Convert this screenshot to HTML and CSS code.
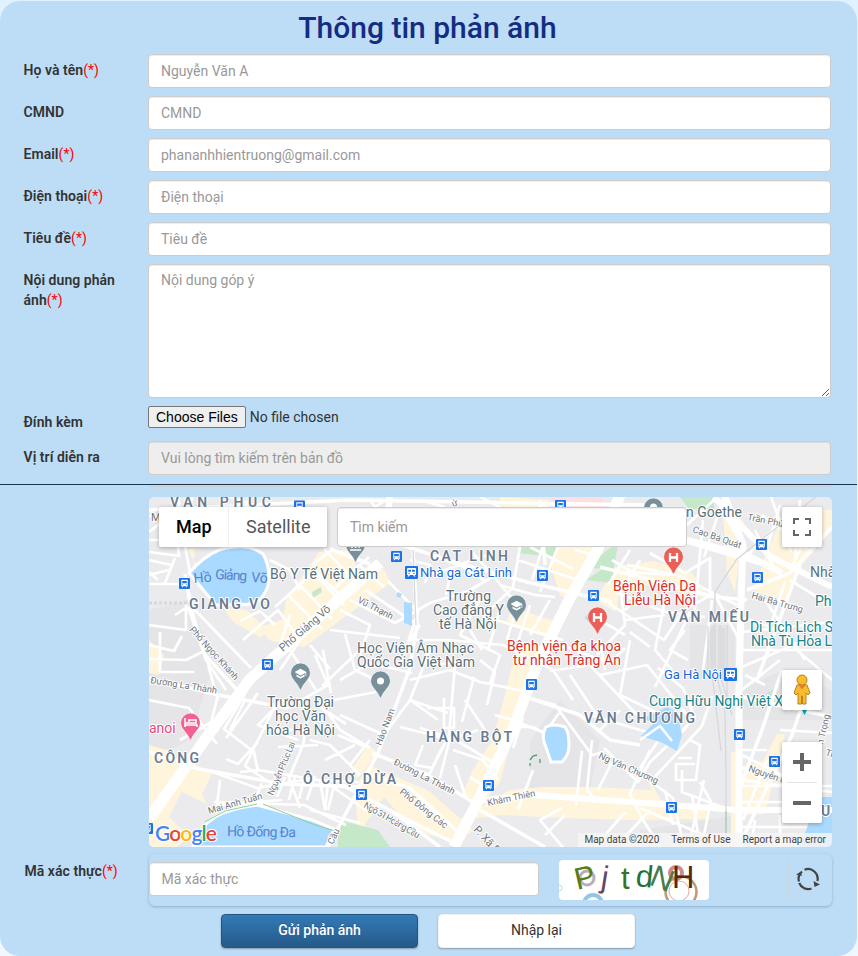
FILE: index.html
```html
<!DOCTYPE html>
<html lang="vi">
<head>
<meta charset="utf-8">
<title>Thông tin phản ánh</title>
<link rel="stylesheet" href="styles.css">
</head>
<body>
<form class="panel">
<h1>Thông tin phản ánh</h1>
<div class="row"><label>Họ và tên<i>(*)</i></label><input class="field" placeholder="Nguyễn Văn A"></div>
<div class="row"><label>CMND</label><input class="field" placeholder="CMND"></div>
<div class="row"><label>Email<i>(*)</i></label><input class="field" placeholder="phananhhientruong@gmail.com"></div>
<div class="row"><label>Điện thoại<i>(*)</i></label><input class="field" placeholder="Điện thoại"></div>
<div class="row"><label>Tiêu đề<i>(*)</i></label><input class="field" placeholder="Tiêu đề"></div>
<div class="row"><label>Nội dung phản ánh<i>(*)</i></label><textarea class="field area" placeholder="Nội dung góp ý"></textarea></div>
<div class="row file-row"><label>Đính kèm</label><input class="file" type="file" multiple></div>
<div class="row"><label>Vị trí diễn ra</label><input class="field readonly" readonly placeholder="Vui lòng tìm kiếm trên bản đồ"></div>
<div class="rule"><span></span></div>
<div class="map">
<svg class="canvas" viewBox="149 497 683 350" width="683" height="350">
<defs>
<symbol id="bus" viewBox="0 0 12 12"><rect width="12" height="12" rx="1" fill="#1a73e8"/><path d="M2.500 2h7v7h-1v1H7.600V9H4.400v1h-1V9h-.900z" fill="#fff"/><path d="M3.500 3.300h5v2.300h-5z" fill="#1a73e8"/><circle cx="4" cy="7.300" r=".6" fill="#1a73e8"/><circle cx="8" cy="7.300" r=".6" fill="#1a73e8"/></symbol>
<symbol id="train" viewBox="0 0 13 13"><rect width="13" height="13" rx="1" fill="#1a73e8"/><path d="M2 3q0-1 1-1h7q1 0 1 1v6H9.500l1 1.500H9L8 9H5l-1 1.500H2.500L3.500 9H2z" fill="#fff"/><path d="M3.200 3.700H6v2H3.200zM7 3.700h2.800v2H7zM3.500 6.900h1.200v1H3.500zM8.300 6.900h1.200v1H8.300z" fill="#1a73e8"/></symbol>
<symbol id="pin" viewBox="0 0 20 27"><path d="M10 0A9.500 9.500 0 0 0 .5 9.500c0 6 6 9 8.600 15.500q.9 2 1.800 0C13.500 18.500 19.500 15.500 19.500 9.500A9.500 9.500 0 0 0 10 0z" stroke="#fff" stroke-width=".6"/></symbol>
<symbol id="cap" viewBox="0 0 12 10"><path d="M0 3.600 6 .3l6 3.300v4h-1V4.500L6 7z M2 6l4 2.200L10 6v2L6 10 2 8z" fill="#fff"/></symbol>
</defs>
<rect x="149" y="497" width="683" height="350" fill="#ebebed"/>
<g fill="#e5e5e7"><path d="M149 610 188 600 215 660 190 740 149 760zM530 740 560 700 600 740 590 790 530 790zM640 830 740 815 738 847 640 847zM690 625h45v55h-45zM742 690l40-20 50 20v30h-90z"/></g>
<g fill="#fef5dc"><path d="M187 549l8-1-2 26 30 34 24 2 20 20-6 8-28-16-19-29zM305 572l14-20 30-2 10 22 25-3 6 14-41 31-45 33-33-6-13-13 25-9 3-20zM555 547l45-5-10 30-22 28-8-5-10-32zM500 497l50 3-2 7h-48zM512 607l50 17-8 16-48-16zM614 567l40-6 38 12 18 26-60-14-30 3-4 24-20-11zM735 592l-8-20-4-60 20 8zM765 557l20-47 47 0v20l-30 35-18 40-30-15zM518 640l22 10-20 60-20 72-16 20-22-6 10-25 20-30 14-50zM149 745l25 7 15 25-20 40 20 20-15 12h-26zM192 762l20 12-10 20 5 10-25-12zM354 789l15-24 60 26 45 40-20 10-40-10-30-34-25 36zM510 790l32-3 50 0 60 3-6-15 15 25 46 7v12l-76 1-70-2-60-3-40 5-20 10zM731 752h6v95h-6zM743 766l20-5 14-27h8l-20 80-22 1zM378 753l-20 25-10-3 20-30zM149 640l15 15-5 20-10-2z"/></g>
<g fill="#c5e8c8"><path d="M520 545h38l-6 12-34-4zM610 548l15-22-10 30-3 13-26-1zM338 820l40 10 12 17h-52zM680 497h34v12h-25zM312 592l9-5 1 5-9 6zM771 696l-4-3 8-4 4 4z"/><path d="M601 570l13-22 3 0-5 35-26-3z"/></g>
<path d="M549 497h54v10h-44z" fill="#fbdfe1"/>
<g fill="none" stroke="#fff" stroke-width="2.700" stroke-linejoin="round">
<path d="M149 540h35l8-43M178 497l8 55 4 20M149 516l33 2M149 532l26-20M149 552l30 4-4-40M149 584h38l4 22 60 62M149 625l37 5v-27M158 580l-9-8M165 583l10-25M149 645l25 6 8-15M160 632v40h34M175 615l12-8M149 560l22 5M188 607l18 53 20 30M206 650l-20 10-37-1M218 700l-10-35M243 640l35-30 22 30-20 30M275 607l40-36 27 26M289 596l33 33M300 585l32 34M314 573l30 32M275 625l-15-14-20 10M270 560l20 10 10 20M324 549l25 26 20-18M333 590l26-25 25 22M332 550l-20 15M280 645l10-30M290 650l26 40M310 645l20 24M323 650l8 43M345 634l10 36 23 11M330 630l70 8M340 610l30 15-10 30M365 590l50 33M388 581l30 31-10 30M350 600l45 23 35-20 38-12 35-20M410 560l20 5-5 18M418 550l40 15 30-10M430 575l30-10 25 16-15 10M452 567l-6 28M470 550l20 22 25 30M513 542l-40 3M520 547l-7 40-30 30M500 585l35 10 20 2M465 595l28 24 70 21M480 600l-20 35 40 20-10 28M500 610l-12 40M470 630l12 20M515 613l-8 27M530 605l-12 36M550 600l-20 35M518 560l60 20M530 547l43 22M545 540l-13 40M560 542l-20 50M575 550l20 5M408 640h40l55 5 50 25 20 30M420 625l-15 23M470 660l-42 6M430 650l-20 50 28 20"/>
<path d="M149 700l40 8 28 36M180 740l35-20M218 695l-10 40M230 730l15-30M246 692l-22 37 30 23 4 20M258 693l-32 45M258 742l-20 22-12-5M275 706l-30 60 30 20M283 700l-25 25 40 15M275 730h35M278 747l40-2M258 770l60 10 40 2M260 770l-20 2M207 770l50 18 58-10M220 780l-3 25 65-5M262 783l-7 17M275 783l-6 12M285 777l-8 20M295 776l-6 24M305 775l-6 24M315 776l-8 24M320 780l5 30M328 783l-3 27M335 782l-7 28M214 802l90 3 42 20M310 810l50 13M327 783l40 28M308 715l-5 30-14 33 11 30M326 710l14 20 30 18M310 740l20 5 30 30M288 708l40-23-13-30M318 706l28 18M322 686l40-38M340 680l30-17 42 10M334 700l42-8M340 715l44 20 26-35 38 13M338 735l28 12M350 765l20-25M325 760l30-15M420 728l30 10-10 40M410 680l40-10 30 12 48 10M455 665l-6 70-20 40M448 740l30-10M474 677l-12 45M480 660l15 12-8 33M400 727l40 10M427 708h27v20h-10v-30M423 745l-8 20 17 3 10-20M453 750l30 10 15 20M455 765l10 30M456 740l36 22M485 735l15 10 9-8M465 700l20 30M490 790l-20-13M495 715l20 6 30 12 14-20"/>
<path d="M515 727h18l30 17M523 718l-10 30M520 695l35 10 37 50 12-3M550 671l40-6 47 50M570 675l30 45M600 675l47-10 40 50M630 640l-10 55 42 20M560 645l50 18 15-15M600 640l5 30M590 715l60 18M592 740l-5 50 11 12M582 751l-6 54M565 850l-15-18-10-12 22-12M545 835l20-20M533 770l-15 40M604 748l34 34 12-20 36-34M612 762l-14 28M620 710l-20 20M650 750l-20 44 10 20M650 782l30-32 22-24 10-30M660 738l-20 30M683 730l12-12-12-30-25-20M690 740l10 5-4 35h-20v-16h19M678 758h14M653 783l20 15 10 45M665 790l8 35M682 770v22l40 15M692 795l8 52M711 800l-8 40M700 782l15 27M704 780l-14 60M650 810l-28 30M625 812l-30 35M640 815l20 32M640 808l90 38M742 755l40 20M742 768l50 10M742 786h90M742 802h40M767 760l-24 60M742 780l90 12M767 750h-25M780 730l52 3M755 820l-4 27M780 815v32M742 827h90"/>
<path d="M627 565l50 10 60 30M615 592l50 20 40 5M640 560l-16 27M650 553l35 20 25-15v40M625 572l50 3M612 560l20 12M604 600l60 40 20-30 27-15M620 585l5 40-28 30M625 610l15-15M625 620l40-5M665 600l-10 50 17 20M630 632l20 15M685 630l-15 20 18 10M690 612l-35 75M712 600l-9 70M715 595l27 50M703 520l-8 90M724 497l-20 60M714 500l-27 25M780 505l-15 50M800 500l-5 60M771 497l20 55M762 515l50 38M755 530l20 40M748 555l40-40M820 507l-28 60M785 582l-15 45-28-10M765 600l40 60M790 580l40 25M742 632l90-10M742 650h90M742 667l70-30M785 640l47 40M780 660l-45 35M765 685l-20-10M794 670l-10 30M760 700l30 10M480 497l20 10M390 497l-15 10M230 497l30 10M420 500l25 7M149 575l20-5M370 500l30 40M600 620l25 15M630 550l-22 35"/></g>
<g fill="#aadaff" stroke="#fff" stroke-width="3"><path d="M189 573q15-17 30-23 28-8 44 4 8 14 5 32-4 10-9 14-10 6-18 4l-25 1z"/><path d="M196 847h-3c8-28 30-38 64-42l55 15 22 9-8 18z"/><path d="M546 727q8-4 19 0 4 5 4 18 0 10-7 17h-11q-4-12-7-20-2-9 2-15z"/></g>
<path d="M641 719l26-12 10 5 5 23-5 16-14-8-22-7 14-14zM832 797h-14l-18 50h32z" fill="#aadaff"/><path d="M640 740l20-14 12 15" fill="none" stroke="#fff" stroke-width="2.500"/>
<path d="M205 822l20-11 32-7M263 804l49 20 23 7" fill="none" stroke="#90cf9b"/>
<path d="M404 602l8 1v23l-8-3zM585 618l6-8 9-2 2 10-10 8zM398 592l4 2-2 4-4-2z" fill="#aadaff"/>
<g fill="none" stroke="#fff" stroke-linejoin="round">
<path stroke-width="3.500" d="M149 510l200-10 300 5M149 678l69 17 70 13M411 665l-33 88-50 94M413 550l4 75-7 42M190 605l15 50 33 36M185 574l5 28M330 549l40 15M387 540l60 20 80 22 85 20M540 500l5 65M687 542l84 25M747 590l43-17 42-46M600 567l60 15 55 15 32 3M742 697l90 20M782 670l-20 60-23 60M800 565l-43 115M149 752l50 17 85 15 75 3M372 753l56 22 50 30M370 775l40 13 48 44M342 785l70 37 40 20M390 810l50 37M520 695l60 20 30 25 30 5M480 810l65 37M742 840l50-105 12-35"/>
<path stroke-width="6" d="M390 497l-5 35M714 497l57 60 61 30M742 542l-17-30v-15M687 540l60 15 35 18M478 801l55-6 70 5 55 4 80 6h94"/>
<path stroke-width="11" d="M149 819l55-78 46-62 70-63 60-53M454 847l23-44 36-74 25-67 32-64 28-49 22-54"/>
<path stroke-width="7" d="M739 847v-157l2-90 2-55-18-48"/></g>
<g fill="none" stroke="#d5d8dc"><path d="M726 847v-75l-1-60-10-45v-75l22-33 95-75M720 625v50l12 40M713 626v55l8 70M708 626v45M727 625v75M413 550l3 75" stroke-width="1.300"/><path d="M149 603h40" stroke-width="3" stroke-dasharray="3 2"/></g>
<path d="M718 628h7v52h-7zM710 628h4v45h-4z" fill="#dadce0"/>
<path d="M726 811v28" stroke="#93c9a1"/>
<path d="M530 760l3-4 4-1M540 759v4M530 763v3" fill="none" stroke="#45a46c" stroke-width="1.300"/>
<g class="street">
<text transform="translate(283 652) rotate(-41)" class="wide" textLength="64">Phố Giảng Võ</text><text transform="translate(189 630) rotate(48)">Phố Ngọc Khánh</text><text transform="translate(150 683) rotate(9)">Đường La Thành</text><text transform="translate(357 602) rotate(27)">Vũ Thạnh</text><text transform="translate(273 796) rotate(-67)" textLength="57">Nguyễn Phúc Lai</text><text transform="translate(209 814) rotate(-16)">Mai Anh Tuấn</text><text transform="translate(393 764) rotate(27)">Đường La Thành</text><text transform="translate(399 793) rotate(38)">Phố Đông Các</text><text transform="translate(363 807) rotate(30)" textLength="63">Ngõ 31 Hoàng Cầu</text><text transform="translate(488 806) rotate(-12)">Khâm Thiên</text><text transform="translate(381 746) rotate(-69)">Hào Nam</text><text transform="translate(598 758) rotate(24)">Ng Văn Chương</text><text transform="translate(748 771) rotate(19)">Nguyễn Du</text><text transform="translate(692 532) rotate(19)">Cao Bá Quát</text><text transform="translate(747 520) rotate(11)">Trần Phú</text><text transform="translate(751 598) rotate(16)">Hai Bà Trưng</text><text transform="translate(473 830) rotate(47)" class="wide">P. Xã Đàn</text><text transform="translate(823 745) rotate(-77)">n Trọng</text><text x="151" y="521" class="wide">M</text><text transform="translate(453 507) rotate(-20)">ứ</text><text transform="translate(333 845) rotate(-65)">Cầu</text><text transform="translate(825 755) rotate(18)">Tr</text></g>
<g class="area-name"><text x="170" y="507" textLength="101">VĂN PHÚC</text><text x="189" y="609" textLength="81">GIANG VO</text><text x="430" y="561" textLength="78">CAT LINH</text><text x="668" y="622" textLength="81">VĂN MIẾU</text><text x="426" y="742" textLength="86">HÀNG BỘT</text><text x="584" y="723" textLength="111">VĂN CHƯƠNG</text><text x="303" y="784" textLength="93">Ô CHỢ DỪA</text><text x="154" y="763" textLength="45">CÔNG</text><text x="821" y="816">U</text></g>
<g class="place"><text x="270" y="579" textLength="108">Bộ Y Tế Việt Nam</text><text x="446" y="601" textLength="45">Trường</text><text x="433" y="615" textLength="71">Cao đẳng Y</text><text x="439" y="629" textLength="58">tế Hà Nội</text><text x="357" y="653" textLength="117">Học Viện Âm Nhạc</text><text x="357" y="667" textLength="118">Quốc Gia Việt Nam</text><text x="267" y="707" textLength="67">Trường Đại</text><text x="275" y="721" textLength="51">học Văn</text><text x="266" y="735" textLength="69">hóa Hà Nội</text><text x="686" y="517" textLength="56">n Goethe</text><text x="810" y="577">Nhà</text>
<g class="water"><text transform="translate(194 583) rotate(-5)">Hồ</text><text transform="translate(215 579) rotate(3)" textLength="32">Giảng</text><text transform="translate(251 582) rotate(4)">Võ</text><text transform="translate(227 836) rotate(1)" textLength="69">Hồ Đống Đa</text></g>
<g class="blue"><text x="420" y="577" textLength="92">Nhà ga Cát Linh</text><text x="664" y="679" textLength="58">Ga Hà Nội</text></g>
<g class="red"><text x="613" y="591" textLength="83">Bệnh Viện Da</text><text x="624" y="605" textLength="72">Liễu Hà Nội</text><text x="507" y="651" textLength="114">Bệnh viện đa khoa</text><text x="513" y="665" textLength="108">tư nhân Tràng An</text></g>
<g class="teal"><text x="815" y="606">Ph</text><text x="750" y="632" textLength="83">Di Tích Lịch S</text><text x="751" y="646" textLength="81">Nhà Tù Hỏa L</text><text x="649" y="706" textLength="134">Cung Hữu Nghị Việt X</text></g><text class="pink" x="149" y="733">anoi</text></g>
<g fill="#78909c"><use href="#pin" x="345" y="535" width="21" height="28"/><use href="#pin" x="506" y="595" width="21" height="28"/><use href="#pin" x="290" y="663" width="21" height="28"/><use href="#pin" x="370" y="671" width="21" height="28"/><use href="#pin" x="643" y="498" width="21" height="28"/></g>
<g fill="#ea6058"><use href="#pin" x="663" y="547" width="21" height="28"/><use href="#pin" x="587" y="607" width="21" height="28"/></g><use href="#pin" x="180" y="713" width="21" height="28" fill="#f06292"/>
<path d="M670 553v9m7-9v9m-7-4.500h7M594 613v9m7-9v9m-7-4.500h7" stroke="#fff" stroke-width="2.300" fill="none"/>
<path d="M185 718v9m0-2h12v2m-12-4h11v-3h-7v2" stroke="#fff" stroke-width="1.500" fill="none"/>
<path d="M350 550h11M352 544v4m3.500-4v4m3.500-4v4" stroke="#fff" fill="none" stroke-width="1.500"/>
<use href="#cap" x="510.500" y="600" width="12" height="11"/><use href="#cap" x="294.500" y="668" width="12" height="11"/><circle cx="380.500" cy="681" r="3.500" fill="#fff"/><circle cx="653.500" cy="507" r="3.500" fill="#fff"/>
<use href="#bus" x="294" y="500" width="11" height="12"/><use href="#bus" x="179" y="577.500" width="11" height="12"/><use href="#bus" x="262" y="658.500" width="11" height="12"/><use href="#bus" x="391" y="550.500" width="11" height="12"/><use href="#bus" x="537" y="569.500" width="11" height="12"/><use href="#bus" x="588" y="589.500" width="11" height="12"/><use href="#bus" x="555" y="499.500" width="11" height="12"/><use href="#bus" x="756" y="538.500" width="11" height="12"/><use href="#bus" x="752" y="571.500" width="11" height="12"/><use href="#bus" x="526" y="678.500" width="11" height="12"/><use href="#bus" x="483" y="779.500" width="11" height="12"/><use href="#bus" x="356" y="788.500" width="11" height="12"/><use href="#bus" x="734" y="728.500" width="11" height="12"/><use href="#bus" x="769" y="755.500" width="11" height="12"/><use href="#bus" x="666" y="801.500" width="11" height="12"/><use href="#bus" x="142" y="822.500" width="11" height="12"/><use href="#train" x="405" y="566" width="13" height="13"/><use href="#train" x="724" y="668" width="13" height="13"/>
<path d="M802 710h5l-2.500 5z" fill="#00acc1"/>
</svg>
<div class="types"><b>Map</b><span>Satellite</span></div>
<input class="field search" placeholder="Tìm kiếm">
<div class="control full"><svg width="18" height="18" viewBox="0 0 18 18"><path d="M0 0h6v2H2v4H0zM12 0h6v6h-2V2h-4zM0 12h2v4h4v2H0zM16 12h2v6h-6v-2h4z" fill="#666"/></svg></div>
<div class="control person"><svg width="18" height="32" viewBox="0 0 18 32"><g fill="#fbbc2c" stroke="#b98222"><path d="M4 11q5-2 10 0l3 8-2 2-2-2v11H9.500v-8h-1v8H5V19l-2 2-2-2z"/><circle cx="9" cy="6" r="5"/></g><path d="M5.500 11h7L9 15.500z" fill="#e57b2b"/></svg></div>
<div class="control zoom"><svg width="40" height="81" viewBox="0 0 40 81"><path d="M11 20h18M20 11v18M11 61h18" stroke="#666" stroke-width="4"/><path d="M5 40.500h30" stroke="#e6e6e6"/></svg></div>
<div class="google"><span>G</span><span>o</span><span>o</span><span>g</span><span>l</span><span>e</span></div>
<div class="credits"><span>Map data ©2020</span><span>Terms of Use</span><span>Report a map error</span></div>
</div>
<div class="row captcha-row"><label>Mã xác thực<i>(*)</i></label>
<div class="captcha"><input class="field code" placeholder="Mã xác thực">
<svg class="challenge" width="150" height="40" viewBox="0 0 150 40"><rect width="150" height="40" rx="4" fill="#fff"/><g fill="none"><circle cx="28" cy="18" r="7" stroke="#b9adb7" stroke-width="3"/><circle cx="34" cy="44" r="9" stroke="#91c6e8" stroke-width="4"/><circle cx="0" cy="28" r="3" stroke="#a7e4e8"/><circle cx="117" cy="13" r="6" stroke="#d08c89" stroke-width="4"/><circle cx="122" cy="32" r="15.500" stroke="#c29a70" stroke-width="2.500"/><circle cx="120" cy="31" r="10" stroke="#eba99f"/></g><g class="glyphs"><text transform="translate(18 30) rotate(-13)" fill="#597b17">P</text><text transform="translate(41 27) rotate(9)" fill="#69445e">j</text><text transform="translate(62 29)" fill="#397320">t</text><text transform="translate(76 26) rotate(6)" fill="#23713f">d</text><text transform="translate(89 24) rotate(22)" fill="#477a4c">N</text><text transform="translate(113 28)" fill="#542a0d">H</text></g></svg>
<span class="divider"></span><svg class="refresh" width="24" height="24" viewBox="0 0 24 24"><g fill="none" stroke="#444" stroke-width="2.200"><path d="M3 14.500A9.500 9.500 0 0 1 6 4.500M8.500 2.700A9.700 9.700 0 0 1 21.400 14M15.500 21.500A9.700 9.700 0 0 1 3.200 16"/></g><path d="M0 7.500 4.500 5 6 9zM17.500 14l6.500 3.500-5.500 2.500z" fill="#444"/></svg></div></div>
<div class="actions"><button class="send" type="button">Gửi phản ánh</button><button class="reset" type="button">Nhập lại</button></div>
</form>
</body>
</html>
```
FILE: styles.css
```css
* { box-sizing: border-box; }
body { margin: 0; padding-top: 1px; height: 956px; overflow: hidden; background: linear-gradient(#e1f2ff, #f1f7fe); font: 14px/20px Roboto, sans-serif; color: #333; }
.panel { width: 857px; height: 955px; border-radius: 20px; background: #bdddf7; }
h1 { margin: 0; height: 53px; padding-top: 9px; text-align: center; font-size: 30px; line-height: 36px; font-weight: 500; color: #142c82; padding-right: 2px; }
.row { display: grid; grid-template-columns: 124.500px 683px; padding-left: 23.500px; margin-bottom: 8px; align-items: start; }
label { padding: 6px 20px 0 0; font-weight: 600; letter-spacing: .04px; }
label i { font-style: normal; font-weight: 400; color: #f00; }
.field { display: block; width: 100%; height: 34px; padding: 6px 12px; border: 1px solid #ccc; border-radius: 4px; background: #fff; box-shadow: inset 0 1px 1px rgba(0,0,0,.075); font: inherit; outline: 0; }
.field::placeholder { color: #999; opacity: 1; }
.area { height: 134px; padding-top: 5px; resize: vertical; }
.readonly { background: #eee; }
.file-row { height: 27px; }
.file { display: block; height: 22px; font: inherit; color: #333; }
.file::file-selector-button { height: 22px; margin: 0 4px 0 0; padding: 1px 7px; border: 1px solid #767676; border-radius: 2px; background: #efefef; font: 14px "Liberation Sans", sans-serif; color: #000; }
.rule { height: 14px; margin-top: 9px; border-top: 1px solid #183650; }
.rule span { display: block; width: 682px; height: 2px; margin-left: 149px; border-bottom: 1px solid #cbcdd0; border-radius: 0 0 4px 4px; }
.map { position: relative; width: 683px; height: 350px; margin: -1px 0 0 149px; overflow: hidden; border-radius: 5px; }
.canvas { display: block; font-family: Roboto, sans-serif; }
.canvas text { paint-order: stroke; stroke: #fff; stroke-width: 2px; stroke-linejoin: round; }
.street { font-size: 9.200px; fill: #6f7479; }
.wide { font-size: 11px; }
.area-name { font-size: 14px; font-weight: 600; fill: #6b7c90; }
.place { font-size: 14px; fill: #596f78; }
.water { fill: #5682ce; }
.canvas .water text { stroke: none; }
.blue { fill: #1967d2; font-size: 13px; }
.red { fill: #d93025; }
.teal { fill: #138489; }
.pink { fill: #e34b82; }
.types { position: absolute; top: 10px; left: 10px; display: flex; width: 168px; height: 40px; background: #fff; border-radius: 2px; box-shadow: 0 1px 4px rgba(0,0,0,.3); font-size: 18px; line-height: 40px; color: #565656; }
.types b { width: 70px; padding-left: 17px; font-weight: 500; color: #000; border-right: 1px solid #eee; }
.types span { padding-left: 17px; }
.search { position: absolute; top: 10px; left: 188px; width: 350px; height: 40px; }
.control { position: absolute; right: 10px; width: 40px; height: 40px; display: grid; place-items: center; background: #fff; border-radius: 2px; box-shadow: 0 1px 4px rgba(0,0,0,.3); }
.full { top: 10px; }
.person { top: 173px; }
.zoom { top: 245px; height: 81px; }
.google { position: absolute; left: 6px; bottom: 2px; font: 600 21px/24px Lato, sans-serif; letter-spacing: -.9px; -webkit-text-stroke: 2px #fff; paint-order: stroke; color: #4285f4; }
.google span:nth-child(2), .google span:nth-child(6) { color: #ea4335; }
.google span:nth-child(3) { color: #fbbc05; }
.google span:nth-child(5) { color: #34a853; }
.credits { position: absolute; right: 0; bottom: 0; display: flex; gap: 12px; height: 14px; padding: 0 6px; background: rgba(245,245,245,.82); font-size: 10px; line-height: 14px; color: #444; white-space: nowrap; }
.captcha-row { grid-template-columns: 124px 684px; padding-left: 24.500px; margin: 7px 0 8px; }
.captcha-row label { padding-top: 7px; }
.captcha { display: flex; width: 683.500px; height: 52px; padding-top: 8px; border-radius: 6px; box-shadow: 0 1px 3px rgba(40,90,130,.35); }
.code { width: 390px; }
.challenge { margin: -2px 0 0 20px; }
.glyphs { font: 31px "Liberation Sans", sans-serif; }
.divider { width: 1px; height: 40px; margin: -3px 7px 0 79px; background: #c9d6de; }
.refresh { margin-top: 5px; }
.actions { display: flex; gap: 20px; padding-left: 221px; }
.actions button { width: 197px; height: 34px; padding: 0 0 2px; border: 1px solid #f3f3f3; border-radius: 4px; background: #fff; box-shadow: 0 1px 2px rgba(0,0,0,.3); font: 14px Roboto, sans-serif; color: #333; }
.actions .send { border-color: #245580; background: linear-gradient(#337ab7, #265a88); color: #fff; font-weight: 500; text-shadow: 0 -1px 0 rgba(0,0,0,.2); }
```
